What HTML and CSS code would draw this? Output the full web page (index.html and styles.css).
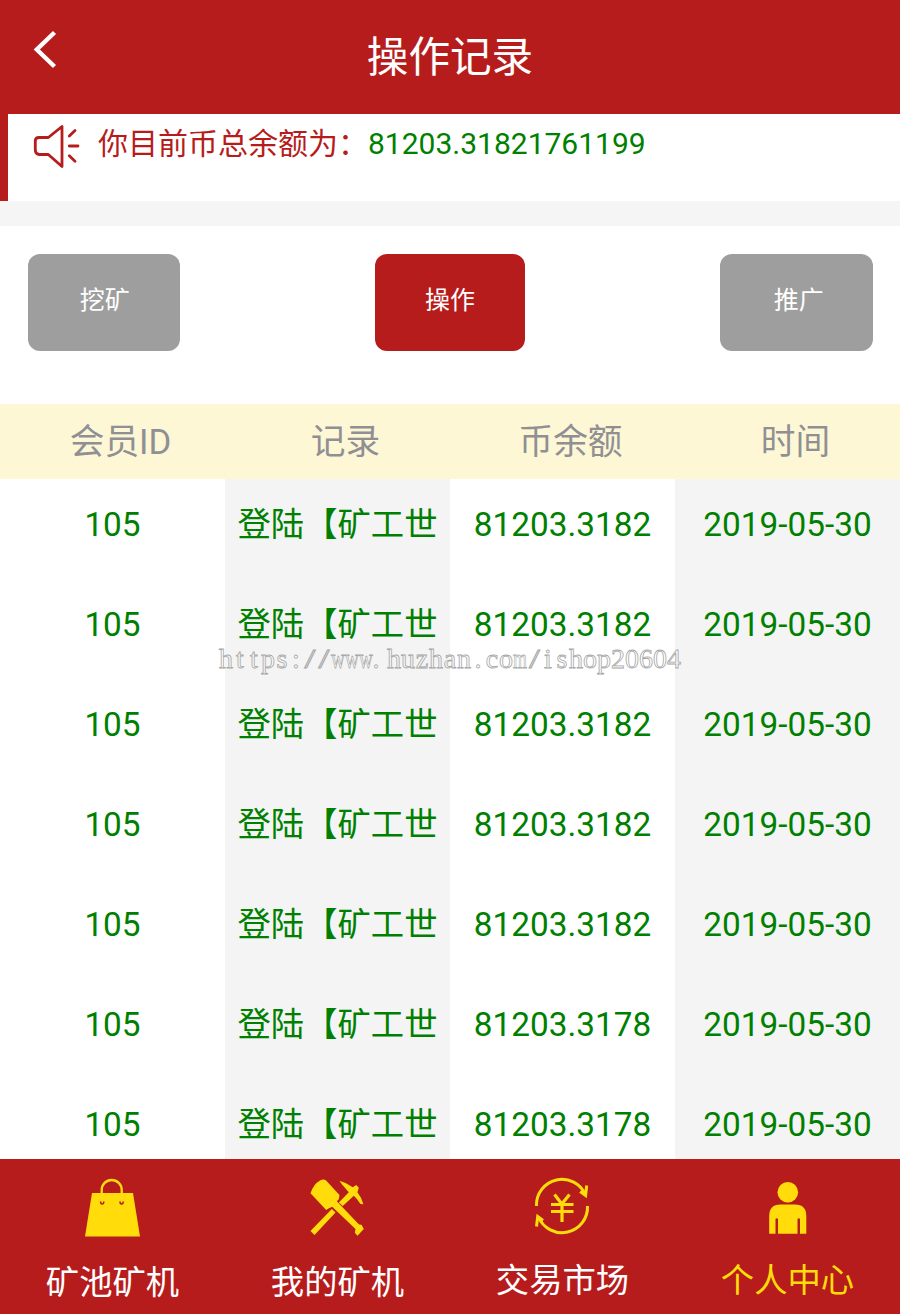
FILE: index.html
```html
<!DOCTYPE html>
<html lang="zh-CN">
<head>
<meta charset="utf-8">
<title>操作记录</title>
<link rel="stylesheet" href="styles.css">
</head>
<body>
<div class="app">
  <header class="topbar">
    <svg class="back" viewBox="0 0 26 42"><path d="M22.500 4.500 4.800 21.500 22.500 38.500"/></svg>
    <h1 class="title">操作记录</h1>
  </header>
  <section class="notice">
    <svg class="speaker" viewBox="0 0 50 50"><path d="M31 5.500V45.500L17.300 33.500H8Q4.300 33 4.300 29V20Q4.300 16.500 8 16.500H17.300Z"/><path d="M38.300 15 44 9.500M38.300 25H47M38.300 34.700 44 40.200"/></svg>
    <p class="notice-text">你目前币总余额为：<span class="amount">81203.31821761199</span></p>
  </section>
  <nav class="tabs">
    <a class="tab tab-mine">挖矿</a>
    <a class="tab tab-active">操作</a>
    <a class="tab tab-share">推广</a>
  </nav>
  <div class="row head"><div>会员ID</div><div>记录</div><div>币余额</div><div>时间</div></div>
  <main class="list">
    <div class="row"><div>105</div><div>登陆【矿工世</div><div>81203.3182</div><div>2019-05-30</div></div>
    <div class="row"><div>105</div><div>登陆【矿工世</div><div>81203.3182</div><div>2019-05-30</div></div>
    <div class="row"><div>105</div><div>登陆【矿工世</div><div>81203.3182</div><div>2019-05-30</div></div>
    <div class="row"><div>105</div><div>登陆【矿工世</div><div>81203.3182</div><div>2019-05-30</div></div>
    <div class="row"><div>105</div><div>登陆【矿工世</div><div>81203.3182</div><div>2019-05-30</div></div>
    <div class="row"><div>105</div><div>登陆【矿工世</div><div>81203.3178</div><div>2019-05-30</div></div>
    <div class="row"><div>105</div><div>登陆【矿工世</div><div>81203.3178</div><div>2019-05-30</div></div>
  </main>
  <footer class="bottom">
    <a class="item">
      <svg class="icon" viewBox="0 0 60 64"><path class="fill" d="M10 18H51L58 61.500H3Z"/><path class="line" stroke-width="2.300" d="M19.700 19V15A10 10 0 0 1 39.700 15V19"/><path class="hole" d="M18.600 26.500Q18.600 29 20.200 29T21.800 26.500M38 26.500Q38 29 39.600 29T41.200 26.500"/></svg>
      <span class="label">矿池矿机</span>
    </a>
    <a class="item">
      <svg class="icon" viewBox="0 0 60 64"><path class="fill" d="M3.500 18.300Q6.500 9 13 5.500 16.500 3.500 18.800 5.200L32.500 20 31.800 24.300 29.800 26.300 52 49.500 54.500 49.800 56.800 54 50.500 60.700 47.800 57.700 48.500 54 25.200 31.700 21.500 33.500 19.200 35Z"/><path class="fill" d="M32.500 5.700Q39.500 7.500 45.800 12.300L49.200 10 51.800 12.700 50.400 17.300Q54.500 22.500 56.400 29.300L53.500 29Q50.500 24 46.800 20.700L35.800 31 31.800 27.500 41.800 17.300 35 9.500Z"/><path class="fill" d="M24.800 34 28.500 37.500 7.500 60 3.500 56Z"/></svg>
      <span class="label">我的矿机</span>
    </a>
    <a class="item item-up">
      <svg class="icon" viewBox="0 0 60 64"><path class="line" stroke-width="3" d="M4.500 31A25.500 25.500 0 0 1 53.500 20M55.500 31A25.500 25.500 0 0 1 6.500 42"/><path class="line" stroke-width="3" d="M54.700 10.500 53.600 20.500 48.200 16.500M4.500 51.500 5.700 41.500 11 45.500"/><path class="line" stroke-width="3.200" d="M22.500 19.500 29.800 29 37.500 19.500M19 29.500H41.500M19 36.500H41.500M30 29V47"/></svg>
      <span class="label">交易市场</span>
    </a>
    <a class="item item-up item-current">
      <svg class="icon" viewBox="0 0 60 64"><circle class="fill" cx="30.800" cy="17.200" r="10.300"/><path class="fill" d="M12.200 58.700V41Q12.200 29.500 23.500 29.500H38Q49.300 29.500 49.300 41V58.700H43V44Q41.800 42.500 40.500 44V58.700H21V44Q19.800 42.500 18.500 44V58.700Z"/></svg>
      <span class="label">个人中心</span>
    </a>
  </footer>
  <svg class="watermark" viewBox="0 0 466 34">
    <text y="25" x="9 23 37 51 65 79">https:</text>
    <text y="25" transform="scale(1.400 1)" x="66.400 76.400">//</text>
    <text y="25" transform="scale(.68 1)" x="177.900 198.500 219.100">www</text>
    <text y="25" x="159 177 191 205 219 233 247 261 275 289">.huzhan.co</text>
    <text y="25" transform="scale(.64 1)" x="473.400">m</text>
    <text y="25" transform="scale(1.400 1)" x="226.800">/</text>
    <text y="25" x="331 345 359 373 387 401 415 429 443 457">ishop20604</text>
  </svg>
</div>
</body>
</html>
```
FILE: styles.css
```css
* { box-sizing: border-box; }
body { margin: 0; font-family: Roboto, "Noto Sans CJK SC", sans-serif; background: #fff; }
.app { position: relative; width: 900px; height: 1314px; display: flex; flex-direction: column; overflow: hidden; }
.topbar { flex: none; height: 114px; display: grid; grid-template-columns: 100px 1fr 100px; background: #b71c1c; color: #fff; }
.back { width: 26px; height: 42px; margin: 28px 0 0 32px; fill: none; stroke: #fff; stroke-width: 4.400; }
.title { margin: 0; text-align: center; font-size: 41.600px; font-weight: 400; line-height: 115px; }
.notice { flex: none; height: 87px; display: flex; align-items: flex-start; border-left: 8px solid #b71c1c; }
.speaker { width: 50px; height: 50px; margin: 7px 0 0 23px; fill: none; stroke: #b71c1c; stroke-width: 2.800; stroke-linejoin: round; stroke-linecap: round; }
.notice-text { margin: 7px 0 0 17px; font-size: 30px; line-height: 45px; color: #b71c1c; white-space: nowrap; }
.amount { color: #008000; }
.tabs { flex: none; height: 203px; display: flex; justify-content: space-between; align-items: flex-start; padding: 28px 27.500px 0; border-top: 25px solid #f5f5f5; }
.tab { width: 152.500px; height: 97px; border-radius: 12px; background: #9e9e9e; color: #fff; text-align: center; font-size: 25px; line-height: 94px; }
.tab-mine { padding-left: 2px; }
.tab-share { padding-left: 5px; }
.tab-active { width: 150px; background: #b71c1c; }
.row { flex: none; display: grid; grid-template-columns: repeat(4, 225px); height: 100px; font-size: 33.333px; color: #008000; text-align: center; line-height: 92px; white-space: nowrap; }
.row > div:nth-child(even) { background: #f4f4f4; }
.head { height: 75px; font-size: 34.700px; line-height: 77px; color: #8f8f94; background: #fdf7d5; }
.head > div { padding-left: 16px; }
.row.head > div:nth-child(even) { background: none; }
.list { flex: 1; min-height: 0; overflow: hidden; }
.bottom { flex: none; height: 155px; display: grid; grid-template-columns: repeat(4, 225px); background: #b71c1c; color: #fff; }
.item { display: flex; flex-direction: column; align-items: center; padding-top: 16px; }
.icon { width: 60px; height: 64px; margin-right: 1px; }
.fill { fill: #ffdc0a; }
.line { fill: none; stroke: #ffdc0a; }
.hole { fill: none; stroke: #b71c1c; stroke-width: 1.500; }
.label { margin-top: 21px; font-size: 33.333px; line-height: 46px; }
.item-up .label { margin-top: 19px; }
.item-current { color: #ffdc0a; }
.watermark { position: absolute; left: 217px; top: 643px; width: 466px; height: 34px; font-family: "Liberation Serif", serif; font-size: 28px; text-anchor: middle; fill: #fff; fill-opacity: .6; stroke: #a6a6a6; stroke-width: .8; }
```
